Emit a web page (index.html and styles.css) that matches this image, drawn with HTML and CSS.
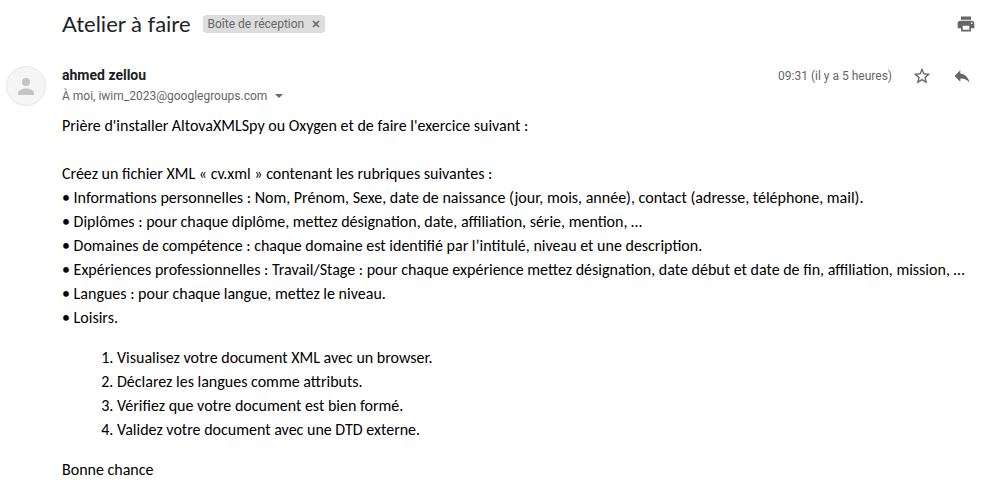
FILE: index.html
```html
<!DOCTYPE html>
<html lang="fr">
<head>
<meta charset="utf-8">
<title>Atelier à faire</title>
<link rel="stylesheet" href="styles.css">
</head>
<body>
<main class="mail">
  <header class="subject">
    <h1 class="subject-title">Atelier à faire</h1>
    <span class="label">Boîte de réception
      <button class="label-remove" type="button" aria-label="Supprimer le libellé"><svg width="8" height="8" viewBox="0 0 8 8"><path d="M1 1l6 6M7 1l-6 6" fill="none" stroke="#666" stroke-width="1.7"/></svg></button>
    </span>
    <button class="icon-button print" type="button" aria-label="Tout imprimer"><svg width="20" height="20" viewBox="0 0 24 24"><path fill="#656565" d="M19 8H5c-1.66 0-3 1.34-3 3v6h4v4h12v-4h4v-6c0-1.66-1.34-3-3-3zm-3 11H8v-5h8v5zm3-7c-.55 0-1-.45-1-1s.45-1 1-1 1 .45 1 1-.45 1-1 1zm-1-9H6v4h12V3z"/></svg></button>
  </header>
  <article class="message">
    <svg class="avatar" viewBox="0 0 40 40" aria-hidden="true"><circle cx="20" cy="20" r="19.5" fill="#f5f5f5" stroke="#e6e6e6"/><circle cx="20" cy="16" r="4" fill="#c4c4c4"/><path fill="#c4c4c4" d="M12 29v-2c0-3 5-4.500 8-4.500s8 1.500 8 4.500v2z"/></svg>
    <div class="content">
      <div class="message-head">
        <div class="people">
          <h2 class="sender">ahmed zellou</h2>
          <div class="recipients">À moi, iwim_2023@googlegroups.com
            <button class="details" type="button" aria-label="Afficher les détails"><svg width="8" height="4" viewBox="0 0 8 4"><path fill="#666" d="M0 0h8L4 4z"/></svg></button>
          </div>
        </div>
        <div class="actions">
          <time class="date">09:31 (il y a 5 heures)</time>
          <button class="icon-button" type="button" aria-label="Suivre"><svg width="20" height="20" viewBox="0 0 24 24"><path fill="#656565" d="M22 9.240l-7.190-.62L12 2 9.190 8.630 2 9.240l5.460 4.730L5.820 21 12 17.270 18.180 21l-1.630-7.030L22 9.240zM12 15.400l-3.760 2.270 1-4.280-3.320-2.880 4.380-.38L12 6.100l1.710 4.040 4.380.38-3.320 2.880 1 4.280L12 15.400z"/></svg></button>
          <button class="icon-button" type="button" aria-label="Répondre"><svg width="20" height="20" viewBox="0 0 24 24"><path fill="#656565" d="M10 9V5l-7 7 7 7v-4.100c5 0 8.500 1.600 11 5.100-1-5-4-10-11-11z"/></svg></button>
        </div>
      </div>
      <div class="text">
        <p>Prière d'installer AltovaXMLSpy ou Oxygen et de faire l'exercice suivant :</p>
        <p class="intro">Créez un fichier XML « cv.xml » contenant les rubriques suivantes :</p>
        <p>• Informations personnelles : Nom, Prénom, Sexe, date de naissance (jour, mois, année), contact (adresse, téléphone, mail).</p>
        <p>• Diplômes : pour chaque diplôme, mettez désignation, date, affiliation, série, mention, …</p>
        <p>• Domaines de compétence : chaque domaine est identifié par l’intitulé, niveau et une description.</p>
        <p>• Expériences professionnelles : Travail/Stage : pour chaque expérience mettez désignation, date début et date de fin, affiliation, mission, …</p>
        <p>• Langues : pour chaque langue, mettez le niveau.</p>
        <p>• Loisirs.</p>
        <ol class="steps">
          <li>Visualisez votre document XML avec un browser.</li>
          <li>Déclarez les langues comme attributs.</li>
          <li>Vérifiez que votre document est bien formé.</li>
          <li>Validez votre document avec une DTD externe.</li>
        </ol>
        <p>Bonne chance</p>
      </div>
    </div>
  </article>
</main>
</body>
</html>
```
FILE: styles.css
```css
* { box-sizing: border-box; }
body { margin: 0; background: #fff; color: #202124; font-family: Roboto, "Liberation Sans", sans-serif; }
h1, h2, p { margin: 0; }
button { display: inline-flex; align-items: center; justify-content: center; padding: 0; border: 0; background: none; cursor: pointer; }
svg { display: block; }
.subject { display: flex; align-items: center; height: 48px; padding: 0 7px 0 62px; }
.subject-title { font: 400 22px/28px Lato, sans-serif; }
.label { display: inline-flex; align-items: center; gap: 8px; height: 18px; margin-left: 12px; padding: 0 5px; border-radius: 4px; background: #ddd; color: #666; font-size: 12px; line-height: 18px; }
.print { margin-left: auto; }
.icon-button { width: 20px; height: 20px; }
.message { display: flex; gap: 16px; padding: 18px 11px 0 6px; }
.avatar { flex: none; width: 40px; height: 40px; }
.content { flex: 1; min-width: 0; }
.message-head { display: flex; justify-content: space-between; }
.sender { font-size: 14px; line-height: 18px; font-weight: 700; }
.recipients { display: flex; align-items: center; gap: 8px; margin-top: 2px; color: #666; font-size: 12px; line-height: 20px; }
.actions { display: flex; align-items: center; gap: 20px; height: 20px; color: #666; }
.date { font-size: 12px; }
.text { margin-top: 8px; color: #000; font: 16px/24px Carlito, Lato, sans-serif; }
.intro { margin-top: 24px; }
.steps { margin: 16px 0; padding-left: 55px; }
```
